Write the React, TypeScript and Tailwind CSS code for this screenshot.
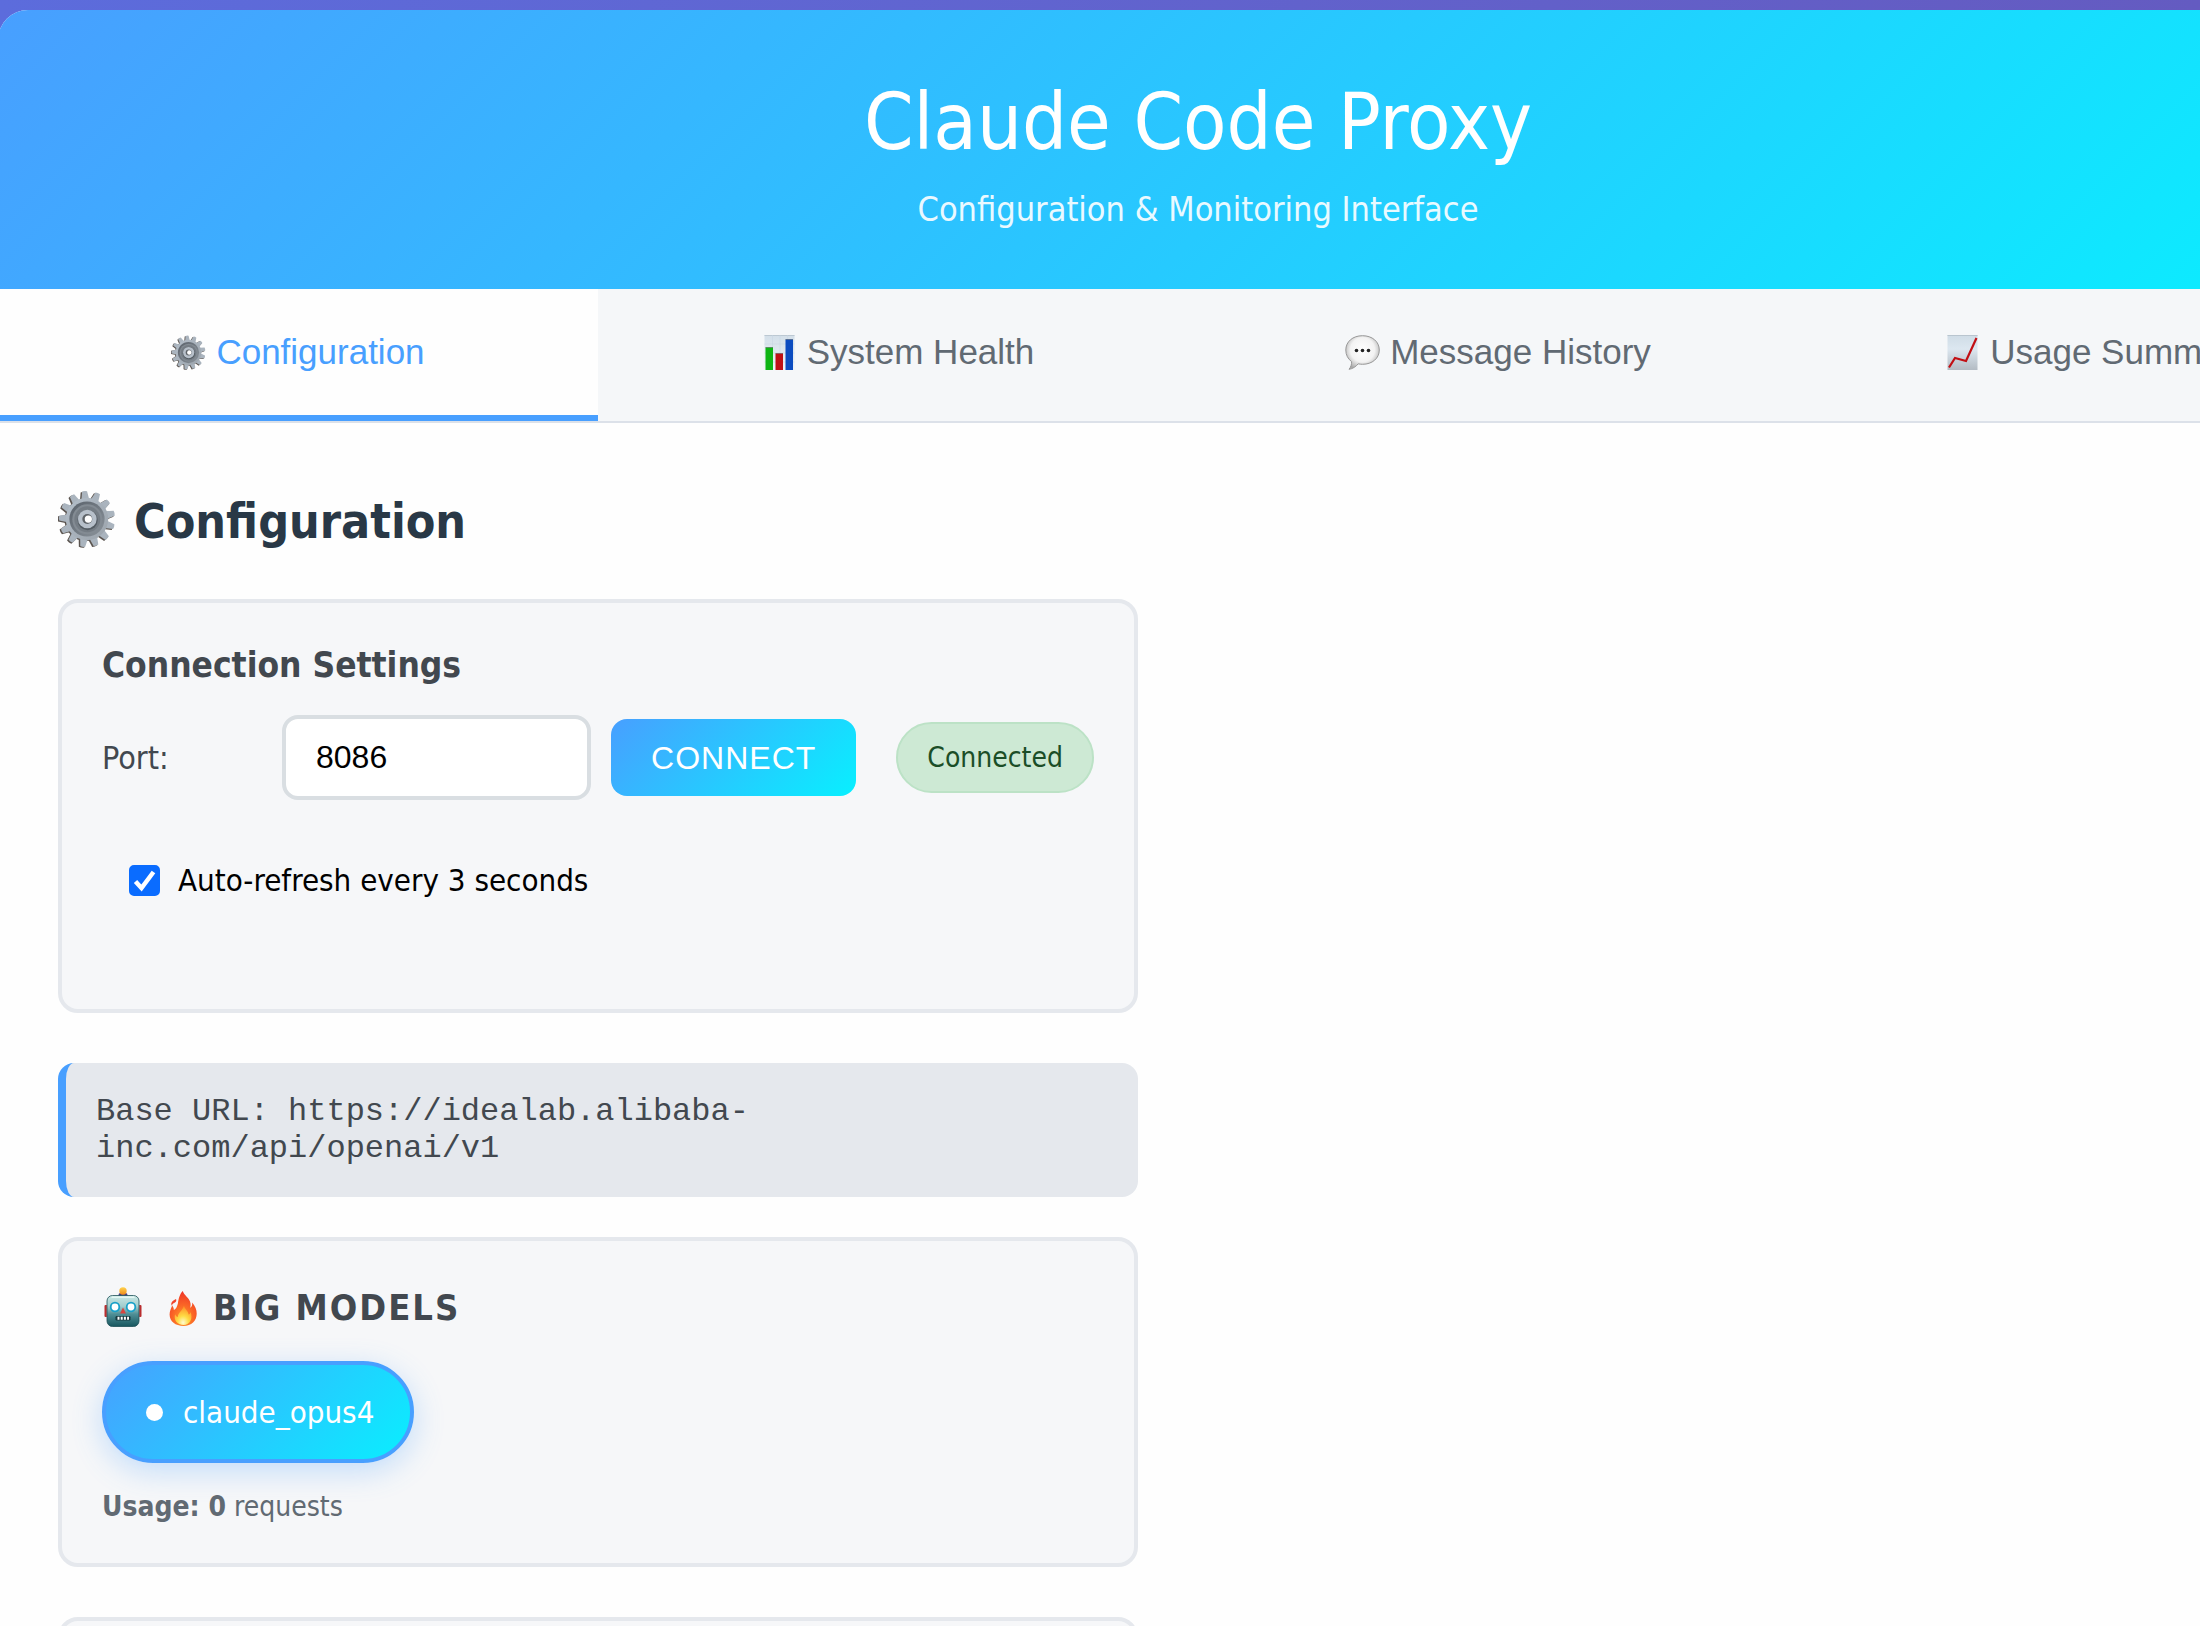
import { useId } from "react";
import type { ReactNode } from "react";

function GearIcon({ className }: { className: string }) {
  const id = useId();
  const teeth = Array.from({ length: 13 }, (_, i) => (i * 360) / 13 - 5);
  return (
    <svg viewBox="0 0 56 56" className={className} aria-hidden="true">
      <defs>
        <linearGradient id={`${id}a`} x1="0" y1="0" x2="1" y2="1">
          <stop offset="0" stopColor="#b4bfca" />
          <stop offset="1" stopColor="#9ba3ab" />
        </linearGradient>
        <linearGradient id={`${id}b`} x1="0" y1="0" x2="1" y2="1">
          <stop offset="0" stopColor="#59616a" />
          <stop offset="1" stopColor="#8b939b" />
        </linearGradient>
      </defs>
      <g fill="#5b544f" transform="translate(-1.2 .8)">
        {teeth.map((a) => (
          <path key={a} d="M24 9.500 25.400 1.200q2.600-.8 5.200 0L32 9.500z" transform={`rotate(${a} 28 28)`} />
        ))}
        <circle cx="28" cy="28" r="20.500" />
      </g>
      <g fill="#aab4be">
        {teeth.map((a) => (
          <path key={a} d="M24.200 9.500 25.600 1.200q2.400-.8 4.800 0L31.800 9.500z" transform={`rotate(${a} 28 28)`} />
        ))}
      </g>
      <circle cx="28" cy="28" r="20.500" fill={`url(#${id}a)`} />
      <circle cx="28" cy="28" r="17" fill={`url(#${id}b)`} />
      <circle cx="28.300" cy="28.300" r="14.500" fill="#838b93" />
      <circle cx="28.300" cy="28.300" r="12.500" fill="#747c84" />
      <circle cx="28.600" cy="29" r="9.800" fill="#555d64" />
      <circle cx="28.300" cy="28" r="9" fill="#b7c0ca" />
      <circle cx="28.300" cy="28" r="4.800" fill="#5e6368" />
      <circle cx="29.300" cy="28" r="3.500" fill="#fff" />
    </svg>
  );
}

function BarChartIcon({ className }: { className: string }) {
  const id = useId();
  return (
    <svg viewBox="0 0 35 35" className={className} aria-hidden="true">
      <defs>
        <linearGradient id={id} x1="0" y1="0" x2="0" y2="1">
          <stop offset="0" stopColor="#d3dfe9" />
          <stop offset="1" stopColor="#eef3f7" />
        </linearGradient>
      </defs>
      <rect x="2.500" width="30" height="35" fill={`url(#${id})`} />
      <path d="M2.500 .5h30" stroke="#bcc8d2" />
      <path d="M10.500 0v35M18 0v35M25.500 0v35M2.500 9h30M2.500 18h30M2.500 27h30" stroke="#c6d5e2" strokeWidth=".5" />
      <path fill="#0eb514" d="M3.500 12.500h7.500V35H3.500z" />
      <path fill="#bf1015" d="M13.500 18.500H21V35h-7.500z" />
      <path fill="#0c4cc0" d="M23.500 4.500H31V35h-7.500z" />
      <path d="M3.500 12.500H11M13.500 18.500H21M23.500 4.500H31" stroke="#333" strokeOpacity=".4" />
    </svg>
  );
}

function ChatIcon({ className }: { className: string }) {
  const id = useId();
  return (
    <svg viewBox="0 0 35 35" className={className} aria-hidden="true">
      <defs>
        <radialGradient id={id} cx=".5" cy=".42" r=".6">
          <stop offset="0" stopColor="#fff" />
          <stop offset=".6" stopColor="#f3f3f3" />
          <stop offset="1" stopColor="#a9a9a9" />
        </radialGradient>
      </defs>
      <path
        d="M17.500 .7C27.300 .7 34.300 6.700 34.300 15S27.300 29.300 17.500 29.300c-1.600 0-3-.2-4.300-.5-2.200 2.700-5.400 5-9.200 5.500 1.900-2.300 2.700-4.800 2.600-7.700C3 24 .8 20 .8 15 .8 6.700 7.700.7 17.500.7z"
        fill={`url(#${id})`}
        stroke="#989898"
        strokeWidth="1"
      />
      <g fill="#222">
        <circle cx="11.500" cy="15.500" r="1.800" />
        <circle cx="17.500" cy="15.500" r="1.800" />
        <circle cx="23.500" cy="15.500" r="1.800" />
      </g>
    </svg>
  );
}

function TrendIcon({ className }: { className: string }) {
  const id = useId();
  return (
    <svg viewBox="0 0 35 35" className={className} aria-hidden="true">
      <defs>
        <linearGradient id={id} x1="0" y1="0" x2="0" y2="1">
          <stop offset="0" stopColor="#cfdce6" />
          <stop offset=".4" stopColor="#dce7f0" />
          <stop offset="1" stopColor="#b3bbc3" />
        </linearGradient>
      </defs>
      <rect x="2.500" width="30" height="35" fill={`url(#${id})`} />
      <path d="M2.500 .5h30" stroke="#b9c5cf" />
      <path d="M4 32.500 10 23l11 3L31.500 3" fill="none" stroke="#c20f14" strokeWidth="2.200" />
    </svg>
  );
}

function RobotIcon({ className }: { className: string }) {
  const id = useId();
  return (
    <svg viewBox="0 0 44 42" className={className} aria-hidden="true">
      <defs>
        <linearGradient id={`${id}a`} x1="0" y1="0" x2="0" y2="1">
          <stop offset="0" stopColor="#c9e8e5" />
          <stop offset=".35" stopColor="#a2cdcd" />
          <stop offset=".6" stopColor="#4f8f96" />
          <stop offset="1" stopColor="#17565f" />
        </linearGradient>
        <linearGradient id={`${id}b`} x1="0" y1="0" x2="0" y2="1">
          <stop offset="0" stopColor="#ffd34d" />
          <stop offset="1" stopColor="#ef8a1b" />
        </linearGradient>
      </defs>
      <rect x="2.500" y="18" width="5" height="12" rx="1" fill="#b92d2f" />
      <rect x="34.500" y="18" width="5" height="12" rx="1" fill="#b92d2f" />
      <path d="M5 18v12M37 18v12" stroke="#f27a72" strokeWidth="1" />
      <rect x="16.500" y="6" width="9" height="5" rx="2" fill="#4b3f7c" />
      <circle cx="21" cy="4" r="3.700" fill={`url(#${id}b)`} />
      <rect x="5" y="8.500" width="32" height="31" rx="5.500" fill={`url(#${id}a)`} stroke="#1d4f57" strokeWidth=".8" />
      <path d="M10 10.300h22" stroke="#e4f6f3" strokeWidth="1.500" strokeLinecap="round" />
      <circle cx="13" cy="20" r="4.300" fill="#fff" stroke="#18a0c8" strokeWidth="1.800" />
      <circle cx="29" cy="20" r="4.300" fill="#fff" stroke="#18a0c8" strokeWidth="1.800" />
      <path d="m21 20.500 3 6h-6z" fill="#d84440" />
      <rect x="13.500" y="29" width="15" height="4.500" rx="1.200" fill="#173a40" />
      <path d="M15.500 31.200h11.500" stroke="#fff" strokeWidth="3" strokeDasharray="2 1.200" />
    </svg>
  );
}

function FlameIcon({ className }: { className: string }) {
  const id = useId();
  return (
    <svg viewBox="0 0 35 35" className={className} aria-hidden="true">
      <defs>
        <radialGradient id={`${id}a`} cx=".5" cy=".8" r=".8">
          <stop offset="0" stopColor="#ffa02a" />
          <stop offset=".5" stopColor="#fa6526" />
          <stop offset="1" stopColor="#ee3428" />
        </radialGradient>
        <radialGradient id={`${id}b`} cx=".5" cy=".88" r=".85">
          <stop offset="0" stopColor="#fffbd0" />
          <stop offset=".4" stopColor="#ffdc45" />
          <stop offset="1" stopColor="#ff8a26" />
        </radialGradient>
      </defs>
      <path
        d="M16.800 0c1 4.500 6.700 6.500 7.700 12.200.3 1.800 0 3.300-.3 4.500 1.500-.8 2.300-2.700 2-5.200 3 3.500 4.600 7.300 4.500 11.300C30.600 30 25.500 34.900 17.500 34.900 9.500 34.900 3.600 30.500 3.600 23.500c0-3.700 1.600-6.200 2.600-9 .9 1.300 1.600 2.300 1.700 4.400 2.200-1.200 3.300-3.500 4-6.500C12.600 8.300 13.300 3.500 16.800 0z"
        fill={`url(#${id}a)`}
      />
      <path d="M10 8c.9 1.900-.2 3.200-1.800 4-1.600.8-2.300 1.600-2.100 2.900C4 12.300 6.200 9.900 10 8z" fill="#f0452c" />
      <path
        d="M18 14.500c.5 3.500 4.200 5.400 4.600 9 1.200-.4 1.700-1.400 1.900-2.600 2.600 6.300-.3 13-6.900 13-6.500 0-10.100-5-8.500-10.700.7 1.400 1.400 2.400 2.700 2.800.2-4.800 4.900-6.200 6.200-11.500z"
        fill={`url(#${id}b)`}
      />
    </svg>
  );
}

const tabs = [
  { label: "Configuration", Icon: GearIcon, active: true },
  { label: "System Health", Icon: BarChartIcon, active: false },
  { label: "Message History", Icon: ChatIcon, active: false },
  { label: "Usage Summary", Icon: TrendIcon, active: false },
];

function Card({ children, className = "" }: { children?: ReactNode; className?: string }) {
  return (
    <section className={`rounded-[20px] border-4 border-[#e5e8ed] bg-[#f6f7f9] p-10 ${className}`}>
      {children}
    </section>
  );
}

export default function App() {
  return (
    <div className="h-screen overflow-hidden bg-linear-to-r from-[#5c6cdc] to-[#645bc1] pt-2.5 font-['DejaVu_Sans_Condensed','DejaVu_Sans',sans-serif]">
      <div className="-ml-0.5 w-[2400px] overflow-hidden rounded-[30px] bg-[#fefefe]">
        <header className="bg-[linear-gradient(135deg,#489fff_0%,#08f0ff_100%)] px-15 pt-[62px] pb-14 text-center text-white">
          <h1 className="text-[79px] leading-[100px]">Claude Code Proxy</h1>
          <p className="mt-3.5 text-[34px] leading-[47px] opacity-90">Configuration &amp; Monitoring Interface</p>
        </header>

        <nav className="grid grid-cols-4 border-b-2 border-[#dce1e9] bg-[#f5f7f9] font-['Liberation_Sans',Arial,sans-serif]">
          {tabs.map(({ label, Icon, active }) => (
            <button
              key={label}
              type="button"
              aria-current={active ? "page" : undefined}
              className={
                active
                  ? "flex h-33 items-center justify-center gap-2.5 border-b-6 border-[#489fff] bg-[#fefefe] text-[35px] text-[#489fff]"
                  : "flex h-33 items-center justify-center gap-2.5 border-b-6 border-transparent text-[35px] text-[#616a73]"
              }
            >
              <Icon className="size-[35px]" />
              {label}
            </button>
          ))}
        </nav>

        <main className="px-15 pt-15 pb-15">
          <h2 className="flex items-center gap-[18px] text-[48px] leading-[76px] font-bold text-[#293846]">
            <GearIcon className="mb-1 size-[58px]" />
            Configuration
          </h2>

          <div className="mt-10 grid grid-cols-2 gap-30">
            <div>
              <Card className="h-[414px]">
                <h3 className="text-[35px] leading-[44px] font-bold text-[#42484f]">Connection Settings</h3>
                <div className="mt-7 flex items-center gap-5">
                  <label htmlFor="port" className="w-40 text-[32px] text-[#42484f]">
                    Port:
                  </label>
                  <input
                    id="port"
                    type="text"
                    defaultValue="8086"
                    className="h-[85px] min-w-0 flex-1 rounded-2xl border-4 border-[#d9dee2] bg-white px-7.5 font-['Liberation_Sans',Arial,sans-serif] text-[32px] text-black"
                  />
                  <button
                    type="button"
                    className="h-[77px] rounded-2xl bg-[linear-gradient(135deg,#489fff_0%,#08f0ff_100%)] px-10 font-['Liberation_Sans',Arial,sans-serif] text-[32px] tracking-[1px] text-white"
                  >
                    CONNECT
                  </button>
                  <span className="ml-5 flex h-[71px] items-center rounded-full border-2 border-[#bce2c6] bg-[#cde9d4] px-[29px] text-[28px] text-[#1b4e27]">
                    Connected
                  </span>
                </div>
                <div className="mt-15 flex items-center gap-4.5 pl-[27px]">
                  <span className="relative flex size-[31px]">
                    <input
                      id="auto-refresh"
                      type="checkbox"
                      defaultChecked
                      className="peer size-[31px] appearance-none rounded-[5px] border-2 border-[#8a9097] bg-white checked:border-[#0a6cff] checked:bg-[#0a6cff]"
                    />
                    <svg
                      viewBox="0 0 31 31"
                      className="pointer-events-none absolute inset-0 hidden size-[31px] peer-checked:block"
                      aria-hidden="true"
                    >
                      <path d="m6.500 16.500 6 6.500L24.500 7" fill="none" stroke="#fff" strokeWidth="4.500" />
                    </svg>
                  </span>
                  <label htmlFor="auto-refresh" className="text-[31px] leading-[40px] text-black">
                    Auto-refresh every 3 seconds
                  </label>
                </div>
              </Card>

              <div className="mt-[50px] rounded-2xl border-l-8 border-[#489fff] bg-[#e5e8ed] p-7.5 font-['Liberation_Mono','Courier_New',monospace] text-[32px] leading-[37px] text-[#42484f]">
                Base URL: https://idealab.alibaba-inc.com/api/openai/v1
              </div>

              <Card className="mt-10 h-[330px]">
                <h3 className="flex items-center pt-0.5 text-[36px] leading-[50px] font-bold text-[#42484f]">
                  <RobotIcon className="h-[42px] w-11" />
                  <FlameIcon className="mr-3 ml-5 size-[35px]" />
                  <span className="tracking-[2px]">BIG MODELS</span>
                </h3>
                <button
                  type="button"
                  className="mt-7 flex h-[102px] items-center gap-5 rounded-full border-4 border-[#489fff] bg-[linear-gradient(135deg,#489fff_0%,#08f0ff_100%)] bg-origin-border pr-9 pl-10 text-[31px] text-white shadow-[0_8px_30px_rgba(72,159,255,0.3)]"
                >
                  <span className="size-[17px] rounded-full bg-white" />
                  claude_opus4
                </button>
                <p className="mt-6 text-[28px] leading-[40px] text-[#616a73]">
                  <strong>Usage: 0</strong> requests
                </p>
              </Card>

              <Card className="mt-[50px] h-[330px]" />
            </div>
          </div>
        </main>
      </div>
    </div>
  );
}
